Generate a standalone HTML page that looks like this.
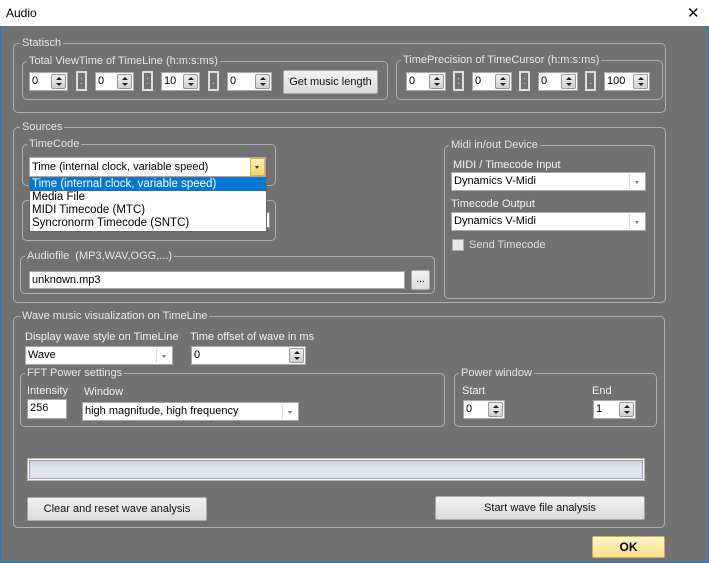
<!DOCTYPE html>
<html><head><meta charset="utf-8"><style>
*{box-sizing:border-box;margin:0;padding:0}
body{width:709px;height:563px;background:#717171;font-family:"Liberation Sans",sans-serif;font-size:11px;position:relative;overflow:hidden;color:#000}
.a{position:absolute}
#tb{left:0;top:0;width:709px;height:26px;background:#fff}
.g{position:absolute;border:1px solid #aab0b8;border-radius:5px}
.gl{position:absolute;top:-8px;left:6px;background:#717171;color:#e8e8e8;padding:0 2px;line-height:14px;white-space:nowrap}
.lb{position:absolute;color:#f4f4f4;white-space:nowrap;line-height:14px}
.f{position:absolute;background:#fff;border:1px solid #a8a8a8;line-height:16px;padding-left:2px;white-space:nowrap}
.sp{position:absolute;right:1px;top:1px;bottom:1px;width:15px;background:linear-gradient(#eee,#d0d0d0);border:1px solid #999;border-radius:2px}
.sp:before{content:"";position:absolute;left:4px;top:2px;border:3px solid transparent;border-bottom:3px solid #222;border-top:0}
.sp:after{content:"";position:absolute;left:4px;bottom:2px;border:3px solid transparent;border-top:3px solid #222;border-bottom:0}
.dd{position:absolute;right:1px;top:1px;bottom:1px;width:15px;border-left:1px solid #ddd}
.dd:after{content:"";position:absolute;left:5px;top:7px;border:2.5px solid transparent;border-top:3px solid #777}
.col{position:absolute;width:11px;height:20px;border:2px solid #ddd;background:#717171;color:#ccc;font-size:11px;text-align:center;line-height:16px}
.btn{position:absolute;background:linear-gradient(#f2f2f2,#dcdcdc);border:1px solid #aaa;border-radius:2px;text-align:center;color:#111}
</style></head><body>
<div id="tb" class="a"><span class="a" style="left:6px;top:6px;font-size:12px">Audio</span><span class="a" style="left:687px;top:4px;font-size:15px;font-weight:300">✕</span></div>
<div class="a" style="left:0;top:26px;width:1px;height:537px;background:#1a7ad4"></div>
<div class="a" style="left:708px;top:26px;width:1px;height:537px;background:#1a7ad4"></div>
<div class="a" style="left:0;top:562px;width:709px;height:1px;background:#1a7ad4"></div>

<div class="g" style="left:13px;top:43px;width:653px;height:70px"><span class="gl">Statisch</span></div>
<div class="g" style="left:22px;top:61px;width:366px;height:39px"><span class="gl" style="left:4px">Total ViewTime of TimeLine (h:m:s:ms)</span></div>
<div class="f" style="left:29px;top:72px;width:39px;height:19px">0<div class="sp"></div></div>
<div class="col" style="left:76px;top:71px">:</div>
<div class="f" style="left:95px;top:72px;width:39px;height:19px">0<div class="sp"></div></div>
<div class="col" style="left:142px;top:71px">:</div>
<div class="f" style="left:161px;top:72px;width:39px;height:19px">10<div class="sp"></div></div>
<div class="col" style="left:208px;top:71px">.</div>
<div class="f" style="left:227px;top:72px;width:45px;height:19px">0<div class="sp"></div></div>
<div class="btn" style="left:283px;top:70px;width:95px;height:24px;line-height:22px">Get music length</div>
<div class="g" style="left:396px;top:60px;width:267px;height:40px"><span class="gl" style="left:4px">TimePrecision of TimeCursor (h:m:s:ms)</span></div>
<div class="f" style="left:406px;top:72px;width:40px;height:19px">0<div class="sp"></div></div>
<div class="col" style="left:453px;top:71px">:</div>
<div class="f" style="left:472px;top:72px;width:40px;height:19px">0<div class="sp"></div></div>
<div class="col" style="left:519px;top:71px">:</div>
<div class="f" style="left:538px;top:72px;width:40px;height:19px">0<div class="sp"></div></div>
<div class="col" style="left:585px;top:71px">.</div>
<div class="f" style="left:604px;top:72px;width:46px;height:19px">100<div class="sp"></div></div>

<div class="g" style="left:13px;top:127px;width:653px;height:176px"><span class="gl">Sources</span></div>
<div class="g" style="left:22px;top:144px;width:254px;height:42px"><span class="gl" style="left:4px">TimeCode</span></div>
<div class="g" style="left:22px;top:200px;width:254px;height:41px"></div>
<div class="a" style="left:266px;top:212px;width:4px;height:16px;background:#fff;border:1px solid #999"></div>
<div class="f" style="left:29px;top:157px;width:237px;height:20px;line-height:18px">Time (internal clock, variable speed)
<div class="a" style="right:0;top:0;width:15px;height:18px;background:linear-gradient(#fdf0b0,#f5d36a);border:1px solid #d7b64a"><div class="a" style="left:4px;top:7px;border:2.5px solid transparent;border-top:3px solid #333"></div></div></div>
<div class="a" style="left:29px;top:177px;width:238px;height:55px;background:#fff;border:1px solid #666;line-height:13px;font-size:11.5px">
<div style="background:#0078d7;color:#fff;padding-left:2px">Time (internal clock, variable speed)</div>
<div style="padding-left:2px">Media File</div>
<div style="padding-left:2px">MIDI Timecode (MTC)</div>
<div style="padding-left:2px">Syncronorm Timecode (SNTC)</div></div>
<div class="g" style="left:20px;top:256px;width:415px;height:38px"><span class="gl" style="left:4px">Audiofile&nbsp; (MP3,WAV,OGG,...)</span></div>
<div class="f" style="left:29px;top:271px;width:376px;height:18px">unknown.mp3</div>
<div class="btn" style="left:411px;top:270px;width:19px;height:20px;line-height:18px;font-size:10px">...</div>
<div class="g" style="left:444px;top:145px;width:211px;height:154px"><span class="gl" style="left:4px">Midi in/out Device</span></div>
<span class="lb" style="left:453px;top:158px">MIDI / Timecode Input</span>
<div class="f" style="left:451px;top:172px;width:195px;height:19px">Dynamics V-Midi<div class="dd"></div></div>
<span class="lb" style="left:451px;top:197px">Timecode Output</span>
<div class="f" style="left:451px;top:212px;width:195px;height:19px">Dynamics V-Midi<div class="dd"></div></div>
<div class="a" style="left:452px;top:239px;width:12px;height:12px;background:#e6e6e6;border:1px solid #aaa"></div>
<span class="lb" style="left:469px;top:238px;color:#e0e0e0">Send Timecode</span>

<div class="g" style="left:13px;top:316px;width:652px;height:212px"><span class="gl">Wave music visualization on TimeLine</span></div>
<span class="lb" style="left:25px;top:330px">Display wave style on TimeLine</span>
<div class="f" style="left:25px;top:346px;width:148px;height:19px">Wave<div class="dd"></div></div>
<span class="lb" style="left:190px;top:330px">Time offset of wave in ms</span>
<div class="f" style="left:191px;top:346px;width:115px;height:19px">0<div class="sp"></div></div>
<div class="g" style="left:20px;top:373px;width:425px;height:54px"><span class="gl" style="left:4px">FFT Power settings</span></div>
<span class="lb" style="left:27px;top:384px">Intensity</span>
<span class="lb" style="left:84px;top:385px">Window</span>
<div class="f" style="left:27px;top:399px;width:40px;height:20px">256</div>
<div class="f" style="left:82px;top:402px;width:217px;height:19px">high magnitude, high frequency<div class="dd"></div></div>
<div class="g" style="left:454px;top:373px;width:203px;height:54px"><span class="gl" style="left:4px">Power window</span></div>
<span class="lb" style="left:462px;top:384px">Start</span>
<span class="lb" style="left:592px;top:384px">End</span>
<div class="f" style="left:463px;top:400px;width:42px;height:19px">0<div class="sp"></div></div>
<div class="f" style="left:593px;top:400px;width:43px;height:19px">1<div class="sp"></div></div>
<div class="a" style="left:27px;top:458px;width:618px;height:23px;border:1px solid #bbb;background:#fff;padding:1px"><div style="width:100%;height:100%;border:1px solid #9aa0b4;background:linear-gradient(#ccd2e0,#e2e6f0 40%,#dde1ec)"></div></div>
<div class="btn" style="left:27px;top:497px;width:180px;height:24px;line-height:22px">Clear and reset wave analysis</div>
<div class="btn" style="left:435px;top:496px;width:210px;height:24px;line-height:22px">Start wave file analysis</div>
<div class="a" style="left:592px;top:536px;width:73px;height:22px;background:linear-gradient(#fff4c8,#fbe08a);border:1px solid #d3a94d;border-radius:2px;text-align:center;font-weight:bold;line-height:20px;font-size:12px">OK</div>
</body></html>
